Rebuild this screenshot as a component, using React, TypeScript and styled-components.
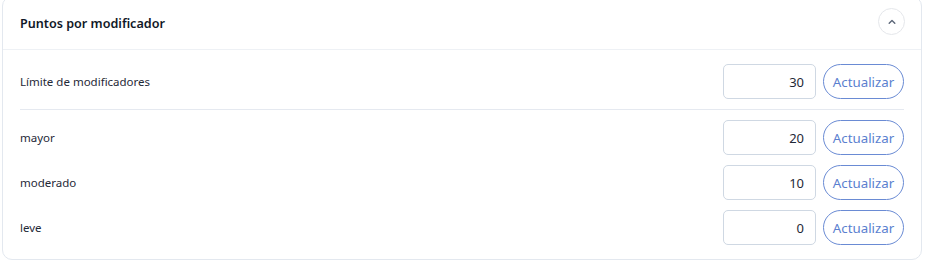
import React, { useState } from 'react'
import { createGlobalStyle, styled } from 'styled-components'

const GlobalStyle = createGlobalStyle`
body {
  margin: 0;
  background: #ffffff;
  font-family: "Segoe UI", "Noto Sans", "Liberation Sans", sans-serif;
}
* { box-sizing: border-box; }
`

interface IModifier {
    id: string
    label: string
    value: number
}

const modifiers: IModifier[] = [
    { id: 'mayor', label: 'mayor', value: 20 },
    { id: 'moderado', label: 'moderado', value: 10 },
    { id: 'leve', label: 'leve', value: 0 },
]

const ValueRow = ({ label, value }: { label: string, value: number }) => {
    const [current, setCurrent] = useState(String(value))
    return (
        <Row>
            <Label>{label}</Label>
            <Controls>
                <NumberInput value={current} onChange={(e) => setCurrent(e.target.value)} />
                <UpdateButton>Actualizar</UpdateButton>
            </Controls>
        </Row>
    )
}

const App = () => {
    const [open, setOpen] = useState(true)
  return (
    <Page>
        <GlobalStyle />
        <Card>
            <Header>
                <Title>Puntos por modificador</Title>
                <Toggle onClick={() => setOpen(!open)} aria-label='toggle'>
                    <svg width='10' height='10' viewBox='0 0 10 10' fill='none'>
                        <path d='M2.2 6.3 L5 3.6 L7.8 6.3' stroke='#5b6678' strokeWidth='1.4' strokeLinecap='round' strokeLinejoin='round' />
                    </svg>
                </Toggle>
            </Header>
            {open && (
                <Body>
                    <ValueRow label='Límite de modificadores' value={30} />
                    <Divider />
                    {modifiers.map((item) => (
                        <ValueRow key={item.id} label={item.label} value={item.value} />
                    ))}
                </Body>
            )}
        </Card>
    </Page>
  )
}

export default App

const Page = styled.div`
padding: 0 7px 6px 2px;
`
const Card = styled.div`
margin-top: -4px;
border: 1px solid #e3e8ef;
border-radius: 10px;
background: #fff;
`
const Header = styled.div`
height: 53px;
display: flex;
align-items: center;
justify-content: space-between;
padding: 0 16px 0 17px;
border-bottom: 1px solid #eef1f5;
`
const Title = styled.h2`
margin: 0;
font-size: 12.6px;
font-weight: 600;
color: #111827;
`
const Toggle = styled.button`
width: 27px;
height: 27px;
border-radius: 50%;
border: 1px solid #e5e7eb;
background: #fff;
display: flex;
align-items: center;
justify-content: center;
padding: 0;
margin-top: -3px;
`
const Body = styled.div`
display: flex;
flex-direction: column;
gap: 10px;
padding: 14px 17px 14px 17px;
`
const Row = styled.div`
display: flex;
align-items: center;
justify-content: space-between;
height: 35px;
`
const Label = styled.span`
font-size: 11.5px;
color: #1f2937;
`
const Controls = styled.div`
display: flex;
gap: 7px;
`
const NumberInput = styled.input`
width: 93px;
height: 35px;
border: 1px solid #cfd8e3;
border-radius: 5px;
text-align: right;
padding: 0 11px;
font-family: inherit;
font-size: 13px;
color: #1f2937;
outline: none;
`
const UpdateButton = styled.button`
width: 81px;
height: 35px;
border: 1px solid #6a8bd4;
border-radius: 18px;
background: #fff;
color: #5a7fcf;
font-family: inherit;
font-size: 13.3px;
padding: 0;
`
const Divider = styled.div`
height: 1px;
background: #e5e9f0;
`
